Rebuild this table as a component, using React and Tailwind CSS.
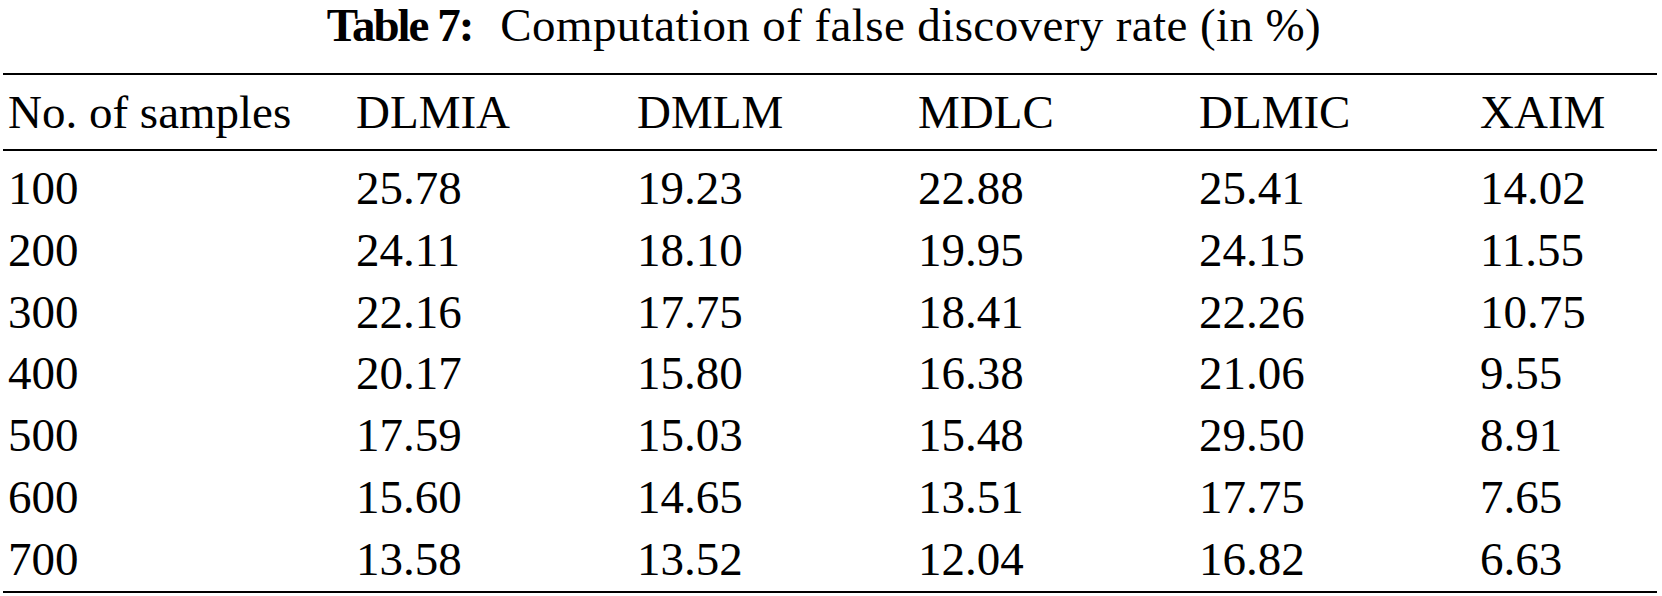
import React from "react";

const headers = ["No. of samples", "DLMIA", "DMLM", "MDLC", "DLMIC", "XAIM"];

const rows = [
  ["100", "25.78", "19.23", "22.88", "25.41", "14.02"],
  ["200", "24.11", "18.10", "19.95", "24.15", "11.55"],
  ["300", "22.16", "17.75", "18.41", "22.26", "10.75"],
  ["400", "20.17", "15.80", "16.38", "21.06", "9.55"],
  ["500", "17.59", "15.03", "15.48", "29.50", "8.91"],
  ["600", "15.60", "14.65", "13.51", "17.75", "7.65"],
  ["700", "13.58", "13.52", "12.04", "16.82", "6.63"],
];

const cols = "grid grid-cols-[348px_281px_281px_281px_281px_1fr]";
const serif = "font-['Liberation_Serif'] text-[47px]";

const App = () => {
  return (
    <div className="w-[1662px] h-[596px] bg-white text-black">
      {/* Judul tabel */}
      <div className={`h-[73px] pr-[14px] pt-[1px] text-center leading-[48px] ${serif}`}>
        <span className={`font-bold tracking-[-2px] ${serif}`}>Table 7:</span>
        <span className={`ml-[28px] tracking-[0.4px] ${serif}`}>
          Computation of false discovery rate (in %)
        </span>
      </div>

      <div className="ml-[3px] w-[1654px]">
        <div className="border-t-[2.5px] border-black" />

        {/* Header */}
        <div className={`${cols} h-[74px] items-center pl-[5px] leading-[62px]`}>
          {headers.map((h) => (
            <div key={h} className={`whitespace-nowrap ${serif}`}>
              {h}
            </div>
          ))}
        </div>

        <div className="border-t-[2.5px] border-black" />

        {/* Isi tabel */}
        <div className="pt-[7px]">
          {rows.map((r) => (
            <div key={r[0]} className={`${cols} pl-[5px] leading-[61.8px]`}>
              {r.map((c, i) => (
                <div key={i} className={serif}>
                  {c}
                </div>
              ))}
            </div>
          ))}
        </div>

        <div className="border-t-[2.5px] border-black" />
      </div>
    </div>
  );
};

export default App;
